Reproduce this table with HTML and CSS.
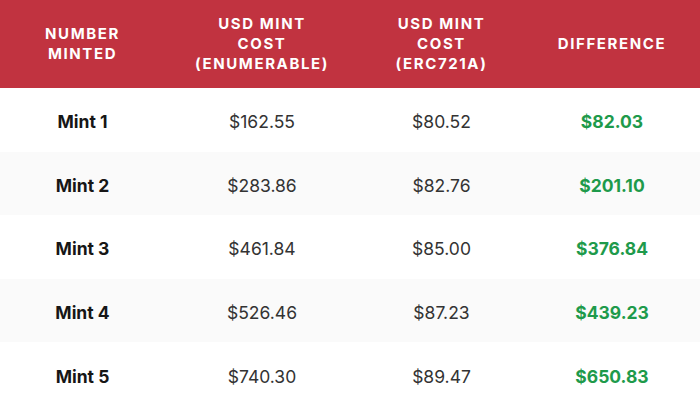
FILE: index.html
```html
<!DOCTYPE html>
<html>
<head>
<meta charset="utf-8">
<link rel="stylesheet" href="styles.css">
</head>
<body>
<div class="table">
  <div class="row head">
    <div class="cell">NUMBER<br>MINTED</div>
    <div class="cell">USD MINT<br>COST<br>(ENUMERABLE)</div>
    <div class="cell">USD MINT<br>COST<br>(ERC721A)</div>
    <div class="cell">DIFFERENCE</div>
  </div>
  <div class="row">
    <div class="cell label">Mint 1</div>
    <div class="cell">$162.55</div>
    <div class="cell">$80.52</div>
    <div class="cell diff">$82.03</div>
  </div>
  <div class="row alt">
    <div class="cell label">Mint 2</div>
    <div class="cell">$283.86</div>
    <div class="cell">$82.76</div>
    <div class="cell diff">$201.10</div>
  </div>
  <div class="row">
    <div class="cell label">Mint 3</div>
    <div class="cell">$461.84</div>
    <div class="cell">$85.00</div>
    <div class="cell diff">$376.84</div>
  </div>
  <div class="row alt">
    <div class="cell label">Mint 4</div>
    <div class="cell">$526.46</div>
    <div class="cell">$87.23</div>
    <div class="cell diff">$439.23</div>
  </div>
  <div class="row">
    <div class="cell label">Mint 5</div>
    <div class="cell">$740.30</div>
    <div class="cell">$89.47</div>
    <div class="cell diff">$650.83</div>
  </div>
</div>
</body>
</html>
```
FILE: styles.css
```css
html, body {
  margin: 0;
  padding: 0;
  background: #ffffff;
}
.table {
  width: 700px;
  height: 406px;
  display: grid;
  grid-template-rows: 88px repeat(5, 1fr);
  font-family: Inter, "Open Sans", sans-serif;
}
.row {
  display: grid;
  grid-template-columns: 165px 194px 165px 176px;
  align-items: center;
  text-align: center;
  background: #ffffff;
  color: #333333;
  font-size: 17.5px;
  padding-top: 4px;
}
.row.alt {
  background: #fafafa;
}
.row.head {
  background: #c13340;
  color: #ffffff;
  font-size: 15px;
  font-weight: 700;
  letter-spacing: 1.6px;
  line-height: 20px;
  padding-top: 0;
}
.cell.label {
  font-weight: 700;
  color: #161616;
}
.cell.diff {
  font-weight: 700;
  color: #1e9a4b;
}
```
